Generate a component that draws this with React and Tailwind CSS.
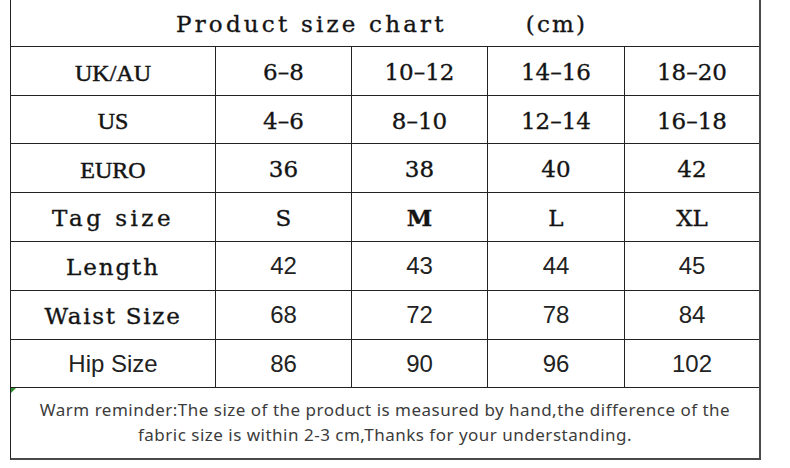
const serif = "font-['DejaVu_Serif',serif] text-[23px] text-[#141414] pt-[3px] [-webkit-text-stroke:0.35px_#141414]";
const caps = "font-['Liberation_Serif',serif] text-[24px] text-[#141414] pt-[3px] [-webkit-text-stroke:0.5px_#141414]";
const sans = "font-['Liberation_Sans',Arial,sans-serif] text-[24px] text-[#222]";

const ROWS = [
  { label: "UK/AU", labelFont: caps, values: ["6–8", "10–12", "14–16", "18–20"], valueFont: serif, h: "h-[48px]" },
  { label: "US", labelFont: caps, values: ["4–6", "8–10", "12–14", "16–18"], valueFont: serif, h: "h-[47px]" },
  { label: "EURO", labelFont: caps, values: ["36", "38", "40", "42"], valueFont: serif, h: "h-[48px]" },
  { label: "Tag size", labelFont: `${serif} tracking-[3.5px]`, values: ["S", "M", "L", "XL"], valueFont: serif, h: "h-[48px]" },
  { label: "Length", labelFont: `${serif} tracking-[1.9px]`, values: ["42", "43", "44", "45"], valueFont: sans, h: "h-[48px]" },
  { label: "Waist Size", labelFont: `${serif} tracking-[1.7px]`, values: ["68", "72", "78", "84"], valueFont: sans, h: "h-[48px]" },
  { label: "Hip Size", labelFont: sans, values: ["86", "90", "96", "102"], valueFont: sans, h: "h-[47px]" },
];

const COL_W = ["w-[136px]", "w-[136px]", "w-[137px]", "w-[135px]"];

export default function App() {
  return (
    <div className="w-[790px] h-[468px] bg-white overflow-hidden">
      <div className="ml-[10px] w-[751px] border-l border-[#222] border-r-2 border-r-[#4a4a4a] border-b-2 border-b-[#4a4a4a]">
        <div className={`h-[47px] border-b border-[#222] flex items-center pl-[165px] ${serif}`}>
          <span className="tracking-[3.2px] whitespace-pre">Product size chart</span>
          <span className="ml-[79px] tracking-[2.2px]">(cm)</span>
        </div>

        {ROWS.map((row) => (
          <div key={row.label} className={`flex ${row.h} box-content border-b border-[#222]`}>
            <div className={`w-[204px] flex items-center justify-center whitespace-pre ${row.labelFont}`}>
              {row.label}
            </div>
            {row.values.map((v, i) => (
              <div
                key={i}
                className={`${COL_W[i]} border-l border-[#222] flex items-center justify-center ${row.valueFont} ${v === "M" ? "font-bold" : ""}`}
              >
                {v}
              </div>
            ))}
          </div>
        ))}

        <div className="relative h-[70px] flex flex-col items-center justify-center pb-[2px] font-['Noto_Sans',sans-serif] text-[17px] tracking-[0.5px] leading-[25px] text-[#3c3c3c]">
          <div className="absolute top-0 left-0 w-0 h-0 border-t-[5px] border-t-[#2f8f2f] border-r-[5px] border-r-transparent" />
          <p>Warm reminder:The size of the product is measured by hand,the difference of the</p>
          <p>fabric size is within 2-3 cm,Thanks for your understanding.</p>
        </div>
      </div>
    </div>
  );
}
